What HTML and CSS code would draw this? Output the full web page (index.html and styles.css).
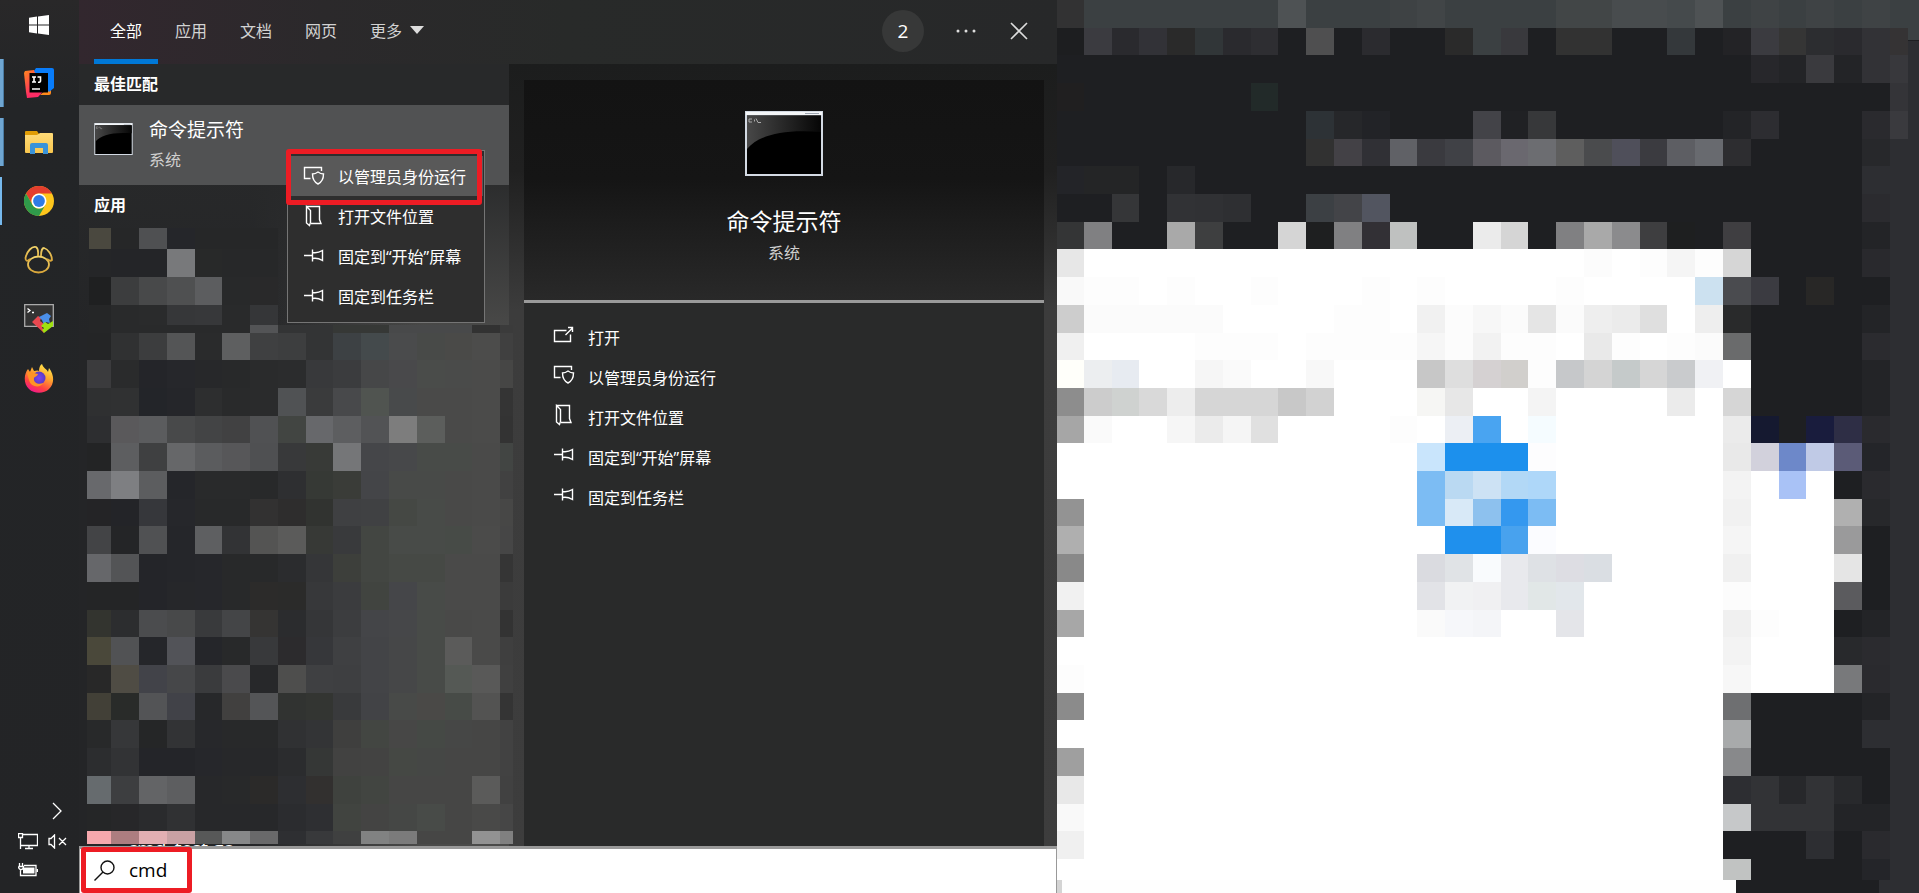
FILE: index.html
```html
<!DOCTYPE html>
<html lang="zh-CN">
<head>
<meta charset="utf-8">
<title>搜索</title>
<link rel="stylesheet" href="styles.css">
</head>
<body>
<svg class="defs" aria-hidden="true">
  <defs>
    <linearGradient id="shine" x1="0" x2="1"><stop offset="0" stop-color="#484848"/><stop offset="1" stop-color="#060606"/></linearGradient>
    <linearGradient id="ijA" x1="0" y1="0" x2="1" y2="1"><stop offset="0" stop-color="#ff8a1c"/><stop offset=".55" stop-color="#ff2d63"/><stop offset="1" stop-color="#ff2a6d"/></linearGradient>
    <linearGradient id="fold" y2="1" x2="0"><stop offset="0" stop-color="#ffdb78"/><stop offset="1" stop-color="#f8c64e"/></linearGradient>
    <linearGradient id="gold" y2="1" x2="0"><stop offset="0" stop-color="#f3d46a"/><stop offset="1" stop-color="#d9a63a"/></linearGradient>
    <linearGradient id="fox" x1=".8" y1="0" x2=".3" y2="1"><stop offset="0" stop-color="#fff04f"/><stop offset=".4" stop-color="#ffa52e"/><stop offset=".75" stop-color="#ff4043"/><stop offset="1" stop-color="#f21690"/></linearGradient>
    <radialGradient id="globe"><stop offset="0" stop-color="#7a45f0"/><stop offset="1" stop-color="#5b3bc4"/></radialGradient>
    <symbol id="i-open" viewBox="0 0 22 22"><path d="M13.500 6.500H1.500v11h16V10.500M12.500 11l7-7M15 3.500h4.500V8"/></symbol>
    <symbol id="i-admin" viewBox="0 0 22 22"><path d="M7.500 13.500h-6v-11h17V6M15 7c2 1.500 4 2 5.500 2 0 5-1.500 8-5.500 10-4-2-5.500-5-5.500-10C11.500 9 13 8.500 15 7z"/></symbol>
    <symbol id="i-folder" viewBox="0 0 22 22"><path d="M3.500 1.500h13v13l1.500 4H8M3.500 1.500l4 4v12l-1 3-3-2.500V2.500z"/></symbol>
    <symbol id="i-pin" viewBox="0 0 22 22"><path d="M1 10.500h8M9.500 4.500v12M9.500 7.500q5 1 10-2v10q-5-3-10-2"/></symbol>
    <symbol id="i-cmd" viewBox="0 0 78 65">
      <path fill="#d3dae3" d="M0 0h78v65H0z"/><path fill="#f4f6f8" d="M1 1h76v3H1z"/><path fill="#9da5b0" d="M60 2h14v1H60z"/>
      <path d="M2 4.500h74V63H2z"/><path fill="url(#shine)" d="M2 4.500h74V21C38 18 14 24 2 38z"/>
      <path fill="none" stroke="#aaa" d="M7 8H4v3h3M9.500 8.500v2M11 7.500l2 4M13 11.500h3"/>
    </symbol>
  </defs>
</svg>
<div class="desktop">
  <nav class="taskbar" aria-label="任务栏">
    <button class="start" aria-label="开始"><svg viewBox="0 0 20 20" width="20" height="20"><path fill="#fff" d="M0 2.700 8 1.600V9.500H0zM9 1.500 20 0v9.500H9zM0 10.500h8v7.900l-8-1.100zM9 10.500h11V20L9 18.500z"/></svg></button>
    <button class="task multi" aria-label="IntelliJ IDEA"><svg viewBox="0 0 30 30"><path fill="url(#ijA)" d="M0 5 1 3l9-1 14 16-10 11-11 1-1-6z"/><path fill="#ff8a1c" d="M16 27h9q2 0 2-2V18z"/><path fill="#087cfa" d="M10 3l2-3h16q2 0 2 2v18l-5 4z"/><path d="M5.500 5H24v19.500H5.500z"/><path fill="none" stroke="#fff" stroke-width="1.600" d="M8 9h4M10 9v5M8 14h4M13.500 9h3v4q0 1.500-2.500 1.200M8 21h8"/></svg></button>
    <button class="task multi" aria-label="文件资源管理器"><svg viewBox="0 0 30 30"><path fill="#e19d05" d="M1 5q0-1 1-1h11l2 3v4H1z"/><path fill="url(#fold)" d="M1 8h12l3-2h12q1 0 1 1v18q0 1-1 1H2q-1 0-1-1z"/><path fill="#3a93d9" d="M6 27V18q0-2 2-2h14q2 0 2 2v9h-5v-6h-8v6z"/></svg></button>
    <button class="task single" aria-label="Google Chrome"><svg viewBox="0 0 30 30"><circle cx="15" cy="15" r="15" fill="#fdc61c"/><path fill="#e33e2e" d="M2 7.500A15 15 0 0 1 28 7.500H15A7.500 7.500 0 0 0 8.500 19z"/><path fill="#2f9a4a" d="M2 7.500 8.500 19A7.500 7.500 0 0 0 21.500 18.700L15 30A15 15 0 0 1 2 7.500z"/><circle cx="15" cy="15" r="7.500" fill="#fff"/><circle cx="15" cy="15" r="5.900" fill="#2e7be6"/></svg></button>
    <button class="task" aria-label="Navicat"><svg viewBox="0 0 30 30" fill="none" stroke="url(#gold)" stroke-width="1.800"><ellipse cx="14.500" cy="19.500" rx="10.500" ry="8"/><path d="M6 14C3 17 1.500 16 1.500 13 3 6 8 1 12 2c3 2 2 6 2 9M17 11c0-4 1-8 3-8 4 1 8 7 8 12q-2 2-5-1"/></svg></button>
    <button class="task" aria-label="Cmder"><svg viewBox="0 0 30 30"><path fill="#333" stroke="#aaa" stroke-width="1.300" d="M.7.700h28.600v21.600H.7z"/><path fill="none" stroke="#fff" stroke-width="1.300" d="M3.500 4.500 6 6.500l-2.500 2M8 8.500h2"/><path fill="#e84850" d="m8 18 6-6 3 2-1 3 4 3-2 3 2 4v2z"/><path fill="#4b8fe8" d="m15 13 8-4 4 3-2 3 1 4-4-1-2 3-2-5z"/><path fill="#9fe010" d="m17 22 4-4 3 2 5-3v5l-9 7-2-3 2-2z"/></svg></button>
    <button class="task" aria-label="Firefox"><svg viewBox="0 0 30 30"><path fill="url(#fox)" d="M18 1c1 4 5 5 6 8l1-4c6 8 5 16 0 21C20 31 10 31 5 26-1 20 0 11 4 6l2 3 2-5 2 4q4-1 5 0C15 5 16 2 18 1z"/><circle cx="15" cy="15" r="6.500" fill="url(#globe)"/><path fill="#ff9326" d="M3 10c4-3 6 0 11 1-1 3-3 2-4 4-1 5 5 7 9 5-2 5-12 5-14-3z"/></svg></button>
    <div class="tray">
      <button class="more" aria-label="显示隐藏的图标"><svg viewBox="0 0 10 18" width="10" height="18"><path d="m1 1 8 8-8 8"/></svg></button>
      <button aria-label="网络"><svg viewBox="0 0 20 17" width="20" height="17"><path d="M5 1.500h14.500v11H2.500V6M2.500 12v4M7 15.500h8M11 13v2M.5.500h4v4h-4zM2.500 4v4"/></svg></button>
      <button aria-label="音量"><svg viewBox="0 0 19 15" width="19" height="15"><path d="M1 4.500h2l3.500-3.500v13L3 10.500H1zM11 4l7 7M18 4l-7 7"/></svg></button>
      <button aria-label="电源"><svg viewBox="0 0 20 14" width="20" height="14"><path d="M6 2.500h12v10H2.500V7M19.500 6v3M1.500 0v3M4.500 0v3M.5 3.500h5c0 4-5 4-5 0"/><path class="solid" d="M5 4.500h11.500v6H5z"/></svg></button>
    </div>
  </nav>

  <main class="search">
    <header class="tabs">
      <button class="tab active">全部</button>
      <button class="tab">应用</button>
      <button class="tab">文档</button>
      <button class="tab">网页</button>
      <button class="tab">更多<svg viewBox="0 0 14 8" width="14" height="8"><path fill="#ddd" d="M0 0h14L7 8z"/></svg></button>
      <span class="points">2</span>
      <button class="tool" aria-label="选项"><svg viewBox="0 0 20 4" width="20" height="4" fill="#ddd"><circle cx="2" cy="2" r="1.500"/><circle cx="10" cy="2" r="1.500"/><circle cx="18" cy="2" r="1.500"/></svg></button>
      <button class="tool" aria-label="关闭"><svg viewBox="0 0 18 18" width="18" height="18"><path stroke="#ddd" stroke-width="1.600" d="m1 1 16 16M17 1 1 17"/></svg></button>
    </header>

    <div class="results">
      <section class="list">
        <h2>最佳匹配</h2>
        <button class="best">
          <svg class="thumb"><use href="#i-cmd"/></svg>
          <span><b>命令提示符</b><small>系统</small></span>
        </button>
        <h2>应用</h2>
        <svg class="mosaic" id="list-mosaic" viewBox="87 228 426 616" preserveAspectRatio="none" aria-hidden="true"></svg>
        <div class="cut" aria-hidden="true"><span>cmd_test.go</span></div>
      </section>

      <section class="detail">
        <div class="hero">
          <svg class="big"><use href="#i-cmd"/></svg>
          <h1>命令提示符</h1>
          <p>系统</p>
        </div>
        <div class="actions">
          <button><svg><use href="#i-open"/></svg>打开</button>
          <button><svg><use href="#i-admin"/></svg>以管理员身份运行</button>
          <button><svg><use href="#i-folder"/></svg>打开文件位置</button>
          <button><svg><use href="#i-pin"/></svg>固定到“开始”屏幕</button>
          <button><svg><use href="#i-pin"/></svg>固定到任务栏</button>
        </div>
      </section>
    </div>

    <div class="query">
      <label for="q" aria-label="搜索"><svg viewBox="0 0 22 22" width="22" height="22"><circle cx="13.500" cy="7.500" r="6.500"/><path d="m9 12-8.500 8.500"/></svg></label>
      <input id="q" type="text" value="cmd">
      <div class="mark mark-query"></div>
    </div>

    <div class="menu" role="menu">
      <button class="hot" role="menuitem"><svg><use href="#i-admin"/></svg>以管理员身份运行</button>
      <button role="menuitem"><svg><use href="#i-folder"/></svg>打开文件位置</button>
      <button role="menuitem"><svg><use href="#i-pin"/></svg>固定到“开始”屏幕</button>
      <button role="menuitem"><svg><use href="#i-pin"/></svg>固定到任务栏</button>
      <div class="mark mark-menu"></div>
    </div>
  </main>

  <aside class="backdrop">
    <svg class="mosaic" id="desk-mosaic" viewBox="1057 0 862 893" preserveAspectRatio="none" aria-hidden="true"></svg>
  </aside>
</div>
<script src="mosaic.js"></script>
</body>
</html>
```
FILE: styles.css
```css
* { box-sizing: border-box; }
body {
  margin: 0;
  font-family: "Open Sans", "Noto Sans CJK SC", sans-serif;
  font-size: 16px;
  color: #fff;
  background: #1e1f22;
}
button {
  margin: 0;
  padding: 0;
  border: 0;
  background: none;
  color: inherit;
  font: inherit;
  text-align: left;
}
h1, h2, p { margin: 0; font-weight: 400; }
.defs { position: absolute; width: 0; height: 0; }
.desktop {
  display: grid;
  grid-template-columns: 79px 978fr 862fr;
  height: 100vh;
  overflow: hidden;
}

.taskbar {
  display: flex;
  flex-direction: column;
  gap: 11px;
  background: linear-gradient(#292829, #232527 12%, #232426);
}
.taskbar button { display: grid; place-items: center; }
.taskbar .start { height: 48px; padding: 2px 2px 0 0; }
.taskbar .task { height: 48px; padding-right: 1px; }
.task svg { width: 30px; height: 30px; }
.taskbar .multi { background: linear-gradient(90deg, #6fa6d2 3px, #4a7ba3 3px, #4a7ba3 4px, transparent 4px); }
.taskbar .single { background: linear-gradient(90deg, #76b9ed 2px, transparent 2px); }
.tray {
  display: grid;
  grid-template-columns: 20px 19px;
  justify-content: center;
  gap: 13px 10px;
  margin-top: auto;
  padding: 0 0 16px 5px;
}
.tray svg { fill: none; stroke: #fff; stroke-width: 1.3; }
.tray .solid { fill: #fff; stroke: none; }
.tray .more { grid-column: 2; }

.search {
  position: relative;
  display: grid;
  grid-template-rows: 64px 1fr 47px;
  min-width: 0;
  min-height: 0;
  background: linear-gradient(#1c1d1d 64px, #202020 170px, #3c3c3c 310px, #3d3d3d);
}
.tabs {
  display: flex;
  gap: 1px;
  padding: 0 12px 0 15px;
  background: linear-gradient(90deg, #32272e, #2b292b 25%, #282a29 50%, #272829);
}
.tab {
  display: flex;
  align-items: center;
  gap: 8px;
  padding: 0 16px;
  border-bottom: 5px solid transparent;
  color: #d2d2d2;
}
.tab.active { color: #fff; border-color: #0078d7; }
.points {
  display: grid;
  place-items: center;
  width: 42px;
  height: 42px;
  margin: 10px 15px 0 auto;
  border-radius: 50%;
  background: #373838;
  font-size: 19px;
}
.tool { display: grid; place-items: center; width: 52px; height: 62px; }

.results {
  display: grid;
  grid-template-columns: 430px 1fr;
  gap: 15px;
  min-height: 0;
  padding-right: 13px;
}
.list {
  position: relative;
  display: flex;
  flex-direction: column;
  min-height: 0;
  background: linear-gradient(#28292a 100px, rgba(40, 41, 42, 0) 270px), linear-gradient(90deg, #242527 40%, #4a4a49 80%);
}
.list h2 {
  height: 41px;
  padding-left: 15px;
  font-size: 16px;
  line-height: 41px;
  font-weight: 700;
}
.best {
  display: flex;
  gap: 16px;
  height: 80px;
  padding-left: 15px;
  background: #515253;
}
.thumb { width: 39px; height: 32px; margin-top: 18px; }
.best b { display: block; margin-top: 11px; font-size: 19px; line-height: 28px; font-weight: 400; }
.best small { display: block; font-size: 16px; line-height: 32px; color: #cfcfcf; }
.mosaic { display: block; overflow: hidden; }
.list .mosaic { flex: 1; width: calc(100% - 4px); min-height: 0; margin: 2px 0 0 8px; }
.cut { height: 2px; overflow: hidden; padding-left: 49px; font-size: 19px; line-height: 20px; }
.cut span { display: block; margin-top: -6px; }

.detail {
  display: flex;
  flex-direction: column;
  margin-top: 16px;
  background: #292a2a;
}
.hero {
  display: flex;
  flex-direction: column;
  align-items: center;
  height: 223px;
  padding-top: 31px;
  border-bottom: 3px solid #9a9a9a;
  background: linear-gradient(#131313, #151515 45%, #292929);
}
.big { width: 78px; height: 65px; }
.hero h1 { margin-top: 28px; font-size: 23px; line-height: 34px; }
.hero p { line-height: 30px; color: #cfcfcf; }
.actions { display: grid; padding: 14px 29px; }
.actions button, .menu button {
  display: flex;
  align-items: center;
  gap: 13px;
  height: 40px;
}
.actions svg { margin-bottom: 4px; }
.actions svg, .menu svg {
  width: 22px;
  height: 22px;
  fill: none;
  stroke: #fff;
  stroke-width: 1.4;
}

.query {
  position: relative;
  display: flex;
  align-items: center;
  gap: 13px;
  padding-left: 14px;
  border: solid #999;
  border-width: 3px 1px 0;
  background: #fff;
}
.query svg { display: block; fill: none; stroke: #111; stroke-width: 1.4; }
.query input {
  flex: 1;
  min-width: 0;
  padding: 0 0 3px;
  border: 0;
  outline: 0;
  background: none;
  color: #000;
  font: inherit;
  font-size: 19px;
}
.mark { position: absolute; border: 5px solid #ed1c24; border-radius: 3px; pointer-events: none; }
.mark-query { left: 1px; top: -2px; width: 111px; height: 46px; }

.menu {
  position: absolute;
  left: 208px;
  top: 150px;
  width: 198px;
  padding: 5px 1px 6px;
  border: 1px solid #757575;
  background: #2e2e2e;
}
.menu button { width: 100%; padding-left: 14px; }
.menu .hot { background: #595959; }
.mark-menu { left: -2px; top: -2px; width: 196px; height: 56px; }

.backdrop { min-width: 0; min-height: 0; }
.backdrop .mosaic { width: 100%; height: 100%; }
```
FILE: mosaic.js
```javascript
const CELL_W = 27.79;
const CELL_H = 27.71;

function rect(svg, x0, y0, x1, y1, fill) {
  const r = document.createElementNS("http://www.w3.org/2000/svg", "rect");
  r.setAttribute("x", x0);
  r.setAttribute("y", y0);
  r.setAttribute("width", x1 - x0);
  r.setAttribute("height", y1 - y0);
  r.setAttribute("fill", fill);
  r.setAttribute("shape-rendering", "crispEdges");
  svg.append(r);
}

// Each row lists colours from the left; "colour*n" repeats a colour n times.
function paint(svg, col, row, box, rows) {
  rows.forEach((line, j) => {
    let k = col;
    const y0 = Math.max(box.top, Math.round((row + j) * CELL_H));
    const y1 = Math.min(box.bottom, Math.round((row + j + 1) * CELL_H));
    line.split(" ").forEach((item) => {
      const [color, n = 1] = item.split("*");
      const x0 = Math.max(box.left, Math.round(k * CELL_W));
      k += Number(n);
      const x1 = Math.min(box.right, Math.round(k * CELL_W));
      rect(svg, x0, y0, x1, y1, "#" + color);
    });
  });
}

const list = document.getElementById("list-mosaic");
paint(list, 3, 8, { left: 89, right: 286, top: 228, bottom: 328 }, [
  "4a483f 262728 4f5052 25262a 262728*3",
  "252628 242528 242528 78797b 282929 272829 272829",
  "1f2021 3c3d3e 48494a 4f5051 5c5d5f 28292a 29292a",
  "252627 292a2b 2a2b2c 363739 37383a 292a2b 353638"
]);
paint(list, 3, 11, { left: 89, right: 513, top: 325, bottom: 333 }, [
  "252627 292a2b*5 535456 333435*2 363836*2 48494a*3 323232 3b3b3b 444444"
]);
paint(list, 3, 12, { left: 87, right: 513, top: 332, bottom: 844 }, [
  "242526 303132 3c3d3e 545556 2a2b2c 5e5f60 3f4041 3d3e3f 333435 3d4144 444a4c 4a4b4c 484a48 4a4a48 4c4c4b 404040",
  "3b3b3d 2a2b2c 242529 26272b 27282a 28292a 2a2b2c 2b2c2d 38393b 3b3c3e 464748 49494b 4a4c4a 4a4b4a 4b4b4a 464645",
  "2f3031 303132 232529 25262a 2d2e2f 292a2b 2a2b2c 505254 3a3b3c 48494b 505450 484a4b 4a4a49*2 4b4b4a 343434",
  "2d2e30 5a595b 5b5c5e 48494a 434445 414142 505153 424542 67686b 5d5e60 525355 7d7d7d 5c5e5c 4a4a49 4b4b4a 333333",
  "232425 5d5e60 3f4041 666769 5b5c5e 575759 4f5052 38393a 383a37 757678 454649 47484a 484b48*2 4a4a49 424543",
  "68696c 7e7f82 5c5d5f 25262a 292a2b*2 28292a 2e2f31 363935 3a3c38 444548 484a48*2 494948 4a4a49 414141",
  "242426 232428 36373b 26272b 28292a*2 323131 2e2d2d 313330 3f4042 404143 454844 484b48 494948 4a4a49 474746",
  "434446 242527 505153 25262a 5e5f61 323335 545453 5b5b5a 373936 393a3c 434642 484b48*2 474b47 4b4b4a 464646",
  "66676a 535456 242529 25262a 26272b 28292a*2 2b2c2e 353638 3d3f3b 434642 464945*2 4a4a49*2 353535",
  "242526*2 242529 26272a 26272b 28292a 2c2b2a 2b2b2a 37383a 3b3c3e 414440 454649 484b48 4a4a49*2 3b3b3b",
  "33342f 2c2d2f 4b4c4e 48494a 393a3c 444547 353433 2b2c2e 353638 3c3d3f 444548 464749 484b48 494948 4a4a49 333333",
  "4a483a 515254 25262a 525358 25262a 28292a 38393b 2c2b2d 36373a 3f4042 434447 464748 484b48 5b5b5a 4a4a49 3f3f3f",
  "282828 4f4c44 424349 464749 3a3b3d 4a4a4c 27282a 4e4e4d 3f4042 3e3f41 434447 464748 484b48 555955 595958 404040",
  "424037 292b29 535456 414248 27282a 41403f 545557 313331 333532 393a3c 424346 484a48 4a4947 474b47 535352 343434",
  "28292a 363739 252627 323335 27282b 28292a*2 303133 333436 3f3f3e 434642 474746 454945 464746 464645 424242",
  "2c2d2f 323335 242529*2 26272b 27282a*2 2b2c2e 353736 424241 434342 454844 454745 464645*2 424242",
  "666b6e 3d3e40 636466 5d5e60 27282a 28292a 2b2a29 2d2e31 32302f 3f423e 424541 464645*3 5b5b5a 414141",
  "252627 272729 2a2b2d 303133 27282a*3 2b2c2f 2e2f32 414440 444443 454745 484b48 464645 494948 464646",
  "f6a8ad ad7d80 e2afb3 c9a1a4 575858 878889 69696a 2e2f32 38393b 3f4040 818282 7b7b7b 464645*2 929292 808080"
]);

const desk = document.getElementById("desk-mosaic");
rect(desk, 1057, 0, 1919, 893, "#1e1f22");
rect(desk, 1889, 41, 1919, 893, "#2d2e32");
rect(desk, 1889, 0, 1919, 40, "#3b4042");
rect(desk, 1057, 880, 1736, 893, "#fefefe");
rect(desk, 1057, 880, 1062, 893, "#d4d4d4");
rect(desk, 1879, 880, 1919, 893, "#2d2e32");
paint(desk, 38, 0, { left: 1057, right: 1908, top: 0, bottom: 880 }, [
  "323233 3b4042*7 4e5254 3b4042*3 3e4244 414547 3b4042*4 424647*2 484c4e*2 454a4c 4e5254 3b4042 3f4345 3b4042 3f4345 3b4042 3f4345 3b4042",
  "1d1e20 3b3b40 2a2a2e 323237 2a2a2a 313638 2a2a2e 2e2e32 1e1f22 4f4f50 1e1f22 2b2b2f 1e1f22*2 2a2a2a 3b4042 39393d 1e1f22 323232*2 1e1f22*2 34383b 1e1f22 232326 3b3b40 353535 2c2d30 2a2a2e 323236 353334",
  "1e1f22*25 27272b 232427 3a3a3e 232427 323236 38383c",
  "201f20 1e1f22*6 222a29 1e1f22*22 343438",
  "1e1f22*9 2d3236 26272a 222327 1e1f22*3 434348 202124 37383a 1e1f22*6 232427 2d2d31 1e1f22*3 2a2a2e 3a3a3e",
  "1e1f22*9 313131 434146 303035 606166 3a3a3f 404146 5c5a60 6a686f 6c6d71 5e5e5e 4a4b4d 4f4f5a 3b3b40 5d5e63 686a6f 2d2d30 1e1f22*4 27282b 2d2e32",
  "232428 242526*2 1e1f22 27282b 1e1f22*24 2d2e32*2",
  "1e1f22*2 353638 1e1f22 313235 303134 2e2f32 1e1f22*2 3c4044 434448 525560 1e1f22*17 2b2b2f 2d2e32",
  "343536 808082 1e1f22*2 a9a9a9 3e3f40 1e1f22*2 d5d5d5 1e1f20 808082 323035 bfc1c0 1e1f22*2 ebebeb d5d5d5 1e1f22 808082 a9a9a9 8b8b8d 3e3e40 1e1f20 1e1f22 3f3e41 1e1f22*4 232427 2d2e32",
  "e7e7e7 fff*18 fcfcfc fff fdfdfd f5f5f5 fdfdfd d6d6d6 1e1f22*4 29292d 2d2e32",
  "f9f9f9 fdfdfd*2 fff fdfdfd fff*2 fdfdfd fff*3 fdfdfd fff fdfdfd fff*4 fdfdfd fff*4 cce1f0 4a4b4f 3b3b41 1e1f22 282726 1e1f22*2 2d2e32",
  "cdcdcd fbfbfb*5 fff*4 fdfdfd*2 fff f1f1f1 fcfcfc f7f7f7 fbfbfb e5e5e5 fbfbfb eeeeee ebebeb dfdfdf fff eeeeee 292a2b 1e1f22*4 232427 2d2e32",
  "f0f0f0 fff*4 fdfdfd*3 fff fdfdfd*4 f6f6f6 fcfcfc f2f2f2 fdfdfd*2 fff e9e9e9 fdfdfd fff fdfdfd fbfbfb 6a6b6c 1e1f22*4 2b2b2f 2d2e32",
  "fffffa eceef0 e7ebf1 fff*2 f6f6f6 fafafa fff*2 f8f8f8 fff*3 c7c7c7 dedede d5d1d2 d1cfcc fdfdfd c6c8ca d4d4d4 c5caca d6d6d6 c9cbcd f0f1f4 fff 1e1f22*4 232427 2d2e32",
  "8d8d8d cccccc cfd2d0 d9d9d9 ededed d6d6d6*3 c8c8c8 d2d2d2 fff*3 f6f6f4 e7e7e7 fff*2 f4f4f4 fff*4 ebebeb fff d6d6d6 1e1f22*4 232427 2d2e32",
  "a6a6a6 fafafa fff*2 f6f6f6 ebebeb f5f5f5 e0e0e0 fff*4 fdfdfd fff eceff4 49a4f1 fff f5fcff fff*6 ebebeb 151930 1e1f22 191c3d 2e2e45 2a2a2e 2d2e32",
  "fff*13 c9e5fc 1c90ed*3 fdfdfe fff*6 e9e9e9 d2d1dc 6d88c9 c0cae6 5b5b77 242529 2d2e32",
  "fff*13 7cbcf3 bad9f2 cde2f4 b2d8f6 aed7f9 fff*6 f3f3f3 fff a9c2f6 fff 1e1f22 2a2a2e 2d2e32",
  "939393 fff*12 7cbcf3 d8e9f7 8dc1ee 3498ef 7cbcf3 fff*6 f1f1f1 fff*3 b0b0b0 27282b 2d2e32",
  "afafaf fff*13 1f90ed*2 48a2ee fbfcff fff*6 f5f5f5 fff*3 9a9a9b 1e1f22 2d2e32",
  "898989 fff*12 dadbe0 e0e3e6 f9fbfd e8e9ed dee1e5 dddde3 dadee3 fff*4 f0f0f0 fff*3 e5e5e5 1e1f22 2d2e32",
  "f1f1f1 fff*12 e2e3e7 f1f2f3 f0f0f2 e8e9ed e1e7e7 e2e7eb fff*5 fcfcfc fff*3 5b5b5e 1e1f22 2d2e32",
  "a7a7a7 fff*12 fafafa f6f7fa f4f5f8 fff*2 e4e5e9 fff*5 f0f0f0 fdfdfd fff*2 1e1f22 232427 2d2e32",
  "fff*24 f3f3f3 fff*3 28292c 2b2b2f 2d2e32",
  "fdfdfd fff*23 f7f7f7 fff*3 78797b 2a2a2e 2d2e32",
  "8b8b8b fff*23 6e6f71 1e1f22*4 232427 2d2e32",
  "fff*24 a8aaab 1e1f22*4 2d2e32*2",
  "9f9f9f fff*23 88898b 1e1f22*5 2d2e32",
  "e8e8e8 fff*23 2d2e32 323336 27282b 323336 28292c 1e1f22 2d2e32",
  "f9f9f9 fff*23 c6c8c9 323336*3 232427*2 2d2e32",
  "f0f0f0 fff*23 1e1f22*3 2d2e32 1e1f22 2a2a2e 2d2e32",
  "fff*24 c1c3c2 1e1f22*4 242529 2d2e32"
]);
```
